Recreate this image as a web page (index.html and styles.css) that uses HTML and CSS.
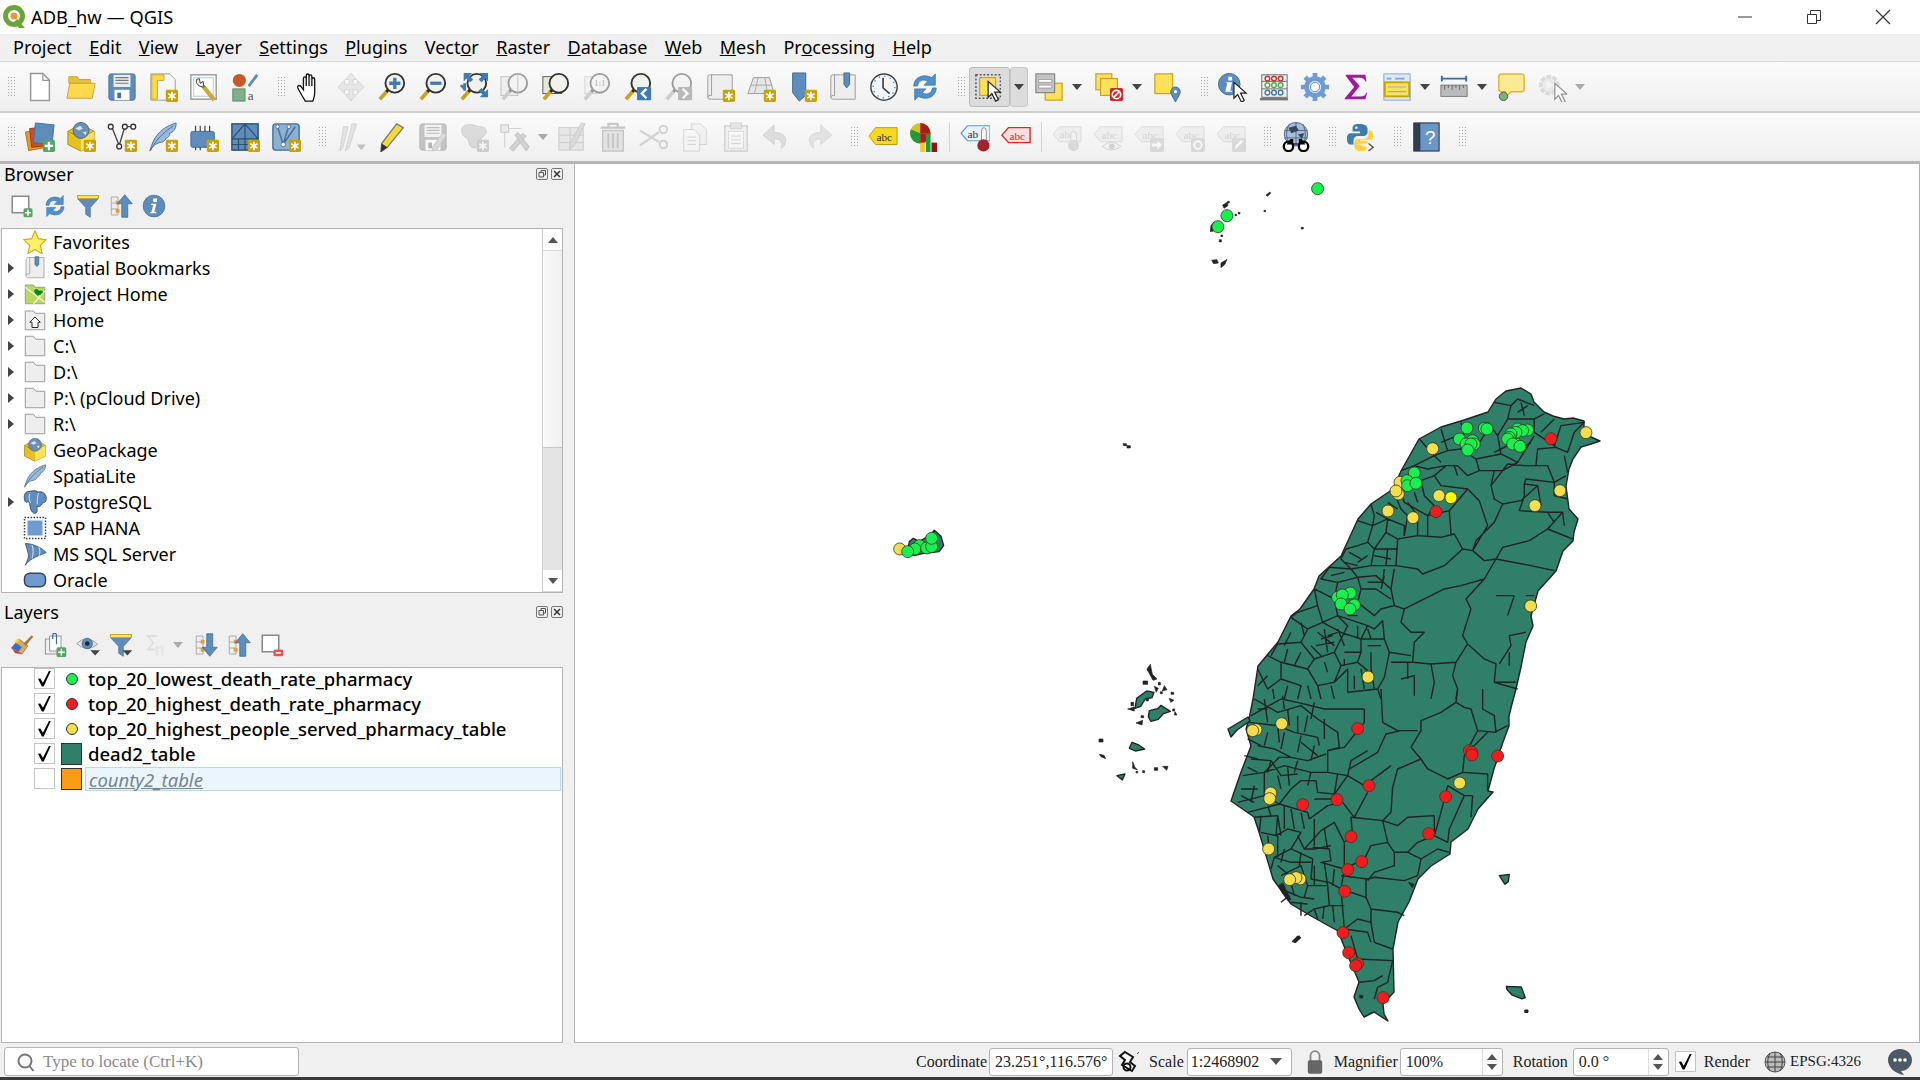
FILE: index.html
```html
<!DOCTYPE html>
<html lang="en">
<head>
  <meta charset="UTF-8">
  <title>ADB_hw — QGIS</title>
  <link rel="stylesheet" href="styles.css">
</head>
<body>
  <!-- icon sprite -->
  <svg class="sprite" xmlns="http://www.w3.org/2000/svg">
    <symbol id="badge" viewBox="0 0 32 32"><rect x="19" y="19" width="13" height="13" rx="1.5" fill="#c9a10a"/><path d="M25.5 21v9M21.6 23.2l7.8 4.6M21.6 27.8l7.8-4.6" stroke="#fff" stroke-width="1.7"/></symbol>
    <symbol id="cursor" viewBox="0 0 32 32"><path d="M14 10v17l4-4 4 8 3-1.500-4-8h6z" fill="#fff" stroke="#222" stroke-width="1.300"/></symbol>
    <symbol id="mag" viewBox="0 0 32 32"><path d="M12 19 3 29" stroke="#c9a227" stroke-width="4"/><path d="M13 18l-3 3" stroke="#222" stroke-width="3"/><circle cx="19" cy="12" r="10" fill="#f1f1ee" stroke="#333" stroke-width="2"/></symbol>
    <symbol id="i-new" viewBox="0 0 32 32"><path d="M6 1.500h13l7 7v22H6z" fill="#fff" stroke="#999" stroke-width="1.600"/><path d="M19 2v7h7" fill="none" stroke="#999" stroke-width="1.300"/></symbol>
    <symbol id="i-open" viewBox="0 0 32 32"><path d="M3 12V5h9l2 3h12v5z" fill="#e6c23a" stroke="#c9a227"/><path d="M1 28 4 12h27l-3 16z" fill="#fdd94f" stroke="#c9a227"/></symbol>
    <symbol id="i-save" viewBox="0 0 32 32"><rect x="2" y="2" width="28" height="28" rx="2.500" fill="#5f8dbb" stroke="#44709b"/><rect x="7" y="3" width="18" height="13" fill="#eee"/><path d="M9 6h14M9 9h14M9 12h14" stroke="#777" stroke-width="1.300"/><rect x="8" y="19" width="16" height="11" fill="#fff"/><rect x="11" y="22" width="4" height="6" fill="#44709b"/></symbol>
    <symbol id="i-layout" viewBox="0 0 32 32"><path d="M3 2h20l6 6v22H3z" fill="#f7f7f7" stroke="#999"/><path d="M4 3h13v6H10v20H4z" fill="#fcd94b" stroke="#c9a227"/><use href="#badge"/></symbol>
    <symbol id="i-manager" viewBox="0 0 32 32"><rect x="2" y="3" width="27" height="26" fill="#fff" stroke="#999" stroke-width="1.500"/><rect x="5" y="6" width="21" height="20" fill="none" stroke="#c8d8ea" stroke-width="1.500"/><path d="M15 15 27 30" stroke="#c9a742" stroke-width="4.500"/><path d="M8 8c-1 4 2 8 8 8l-1-6-3 2-1-5z" fill="#eee" stroke="#333"/></symbol>
    <symbol id="i-style" viewBox="0 0 32 32"><circle cx="10" cy="9" r="7" fill="#c6592b"/><path d="M20 15 29 3" stroke="#5f8dbb" stroke-width="3"/><rect x="3" y="18" width="13" height="13" fill="#7fb08a" stroke="#5a8a66"/></symbol>
    <symbol id="i-hand" viewBox="0 0 32 32"><path d="M11 31C8 26 5 21 3 17c-1-2.500 2-3.500 3.500-1.500L9 19V7c0-2.500 3-2.500 3 0v8V4c0-2.500 3-2.500 3 0v11V5c0-2.500 3-2.500 3 0v10V8c0-2.500 3-2.500 3 0v14c0 4-1 6-2 9z" fill="#fff" stroke="#111" stroke-width="1.400"/></symbol>
    <symbol id="i-pan" viewBox="0 0 32 32"><path d="M16 1l6 7h-4v5h5V9l7 7-7 7v-4h-5v5h4l-6 7-6-7h4v-5H9v4l-7-7 7-7v4h5V8h-4z" fill="#cfd6d6" stroke="#a8b2b2"/></symbol>
    <symbol id="i-zin" viewBox="0 0 32 32"><use href="#mag"/><path d="M13 12h12M19 6v12" stroke="#3f7ab5" stroke-width="3.500"/></symbol>
    <symbol id="i-zout" viewBox="0 0 32 32"><use href="#mag"/><path d="M13 12h12" stroke="#3f7ab5" stroke-width="3.500"/></symbol>
    <symbol id="i-zfull" viewBox="0 0 32 32"><use href="#mag"/><path d="M5 1h9l-3 3 4 4-3 3-4-4-3 3zM31 1v9l-3-3-4 4-3-3 4-4-3-3zM31 27h-9l3-3-4-4 3-3 4 4 3-3v9z" fill="#3f7ab5"/><path d="M6 12v8M2 14l4 4" stroke="#3f7ab5" stroke-width="3"/></symbol>
    <symbol id="i-zlayer" viewBox="0 0 32 32"><rect x="2" y="5" width="20" height="18" fill="#e8e8d8" stroke="#555"/><use href="#mag"/></symbol>
    <symbol id="i-zsel" viewBox="0 0 32 32"><rect x="1" y="5" width="18" height="20" fill="#e8e8d0" stroke="#888"/><use href="#mag"/><path d="M19 2v20" stroke="#888"/></symbol>
    <symbol id="i-znative" viewBox="0 0 32 32"><rect x="3" y="5" width="18" height="18" fill="#eee" stroke="#aaa"/><use href="#mag"/></symbol>
    <symbol id="i-zlast" viewBox="0 0 32 32"><use href="#mag"/><rect x="15" y="16" width="15" height="14" rx="1" fill="#3f7ab5"/><path d="M25 18l-5 5 5 5" fill="none" stroke="#fff" stroke-width="2.500"/></symbol>
    <symbol id="i-znext" viewBox="0 0 32 32"><use href="#mag"/><rect x="15" y="16" width="15" height="14" rx="1" fill="#3f7ab5"/><path d="M20 18l5 5-5 5" fill="none" stroke="#fff" stroke-width="2.500"/></symbol>
    <symbol id="i-newmap" viewBox="0 0 32 32"><path d="M5 3c-2 0-2 2-2 4v20c0 2 2 2 4 2h22V3z" fill="#eee" stroke="#999"/><path d="M7 3v22c-2 0-4 0-4 2" fill="none" stroke="#999"/><use href="#badge"/></symbol>
    <symbol id="i-3d" viewBox="0 0 32 32"><path d="M8 6h17l5 17H2z" fill="#e6e6e6" stroke="#999"/><path d="M13 6l-4 17M20 6l3 17M5 14h23" stroke="#aaa"/><path d="M30 26h2" stroke="#999"/><use href="#badge"/></symbol>
    <symbol id="i-newbm" viewBox="0 0 32 32"><path d="M6 1h14v24l-7 6-7-9z" fill="#5f8dbb" stroke="#3f6a94"/><use href="#badge"/></symbol>
    <symbol id="i-bm" viewBox="0 0 32 32"><path d="M5 3c-2 0-2 2-2 4v20c0 2 2 2 4 2h22V3z" fill="#eee" stroke="#999"/><path d="M7 3v22c-2 0-4 0-4 2" fill="none" stroke="#999"/><path d="M17 1h6v12l-3 4-3-4z" fill="#5f8dbb" stroke="#3f6a94"/></symbol>
    <symbol id="i-clock" viewBox="0 0 32 32"><circle cx="16" cy="16" r="14" fill="#f4f6f8" stroke="#444" stroke-width="1.600"/><circle cx="16" cy="16" r="11.500" fill="none" stroke="#5f8dbb" stroke-width="1.500" stroke-dasharray="1.500 4.500"/><path d="M15 6v11l7 6" fill="none" stroke="#444" stroke-width="1.800"/></symbol>
    <symbol id="i-refresh" viewBox="0 0 32 32"><path d="M4 15C4 6 14 1 23 6l4-4v12H15l4-4c-5-3-10-1-11 5z" fill="#4f90cd" stroke="#3f72a8" stroke-width=".8"/><path d="M28 17c0 9-10 14-19 9l-4 4V18h12l-4 4c5 3 10 1 11-5z" fill="#4f90cd" stroke="#3f72a8" stroke-width=".8"/></symbol>
    <symbol id="i-select" viewBox="0 0 32 32"><rect x="1" y="3" width="26" height="25" fill="none" stroke="#555" stroke-width="1.500" stroke-dasharray="2 2"/><rect x="5" y="6" width="17" height="19" fill="#fce25a" stroke="#c9a227" stroke-width="1.300"/><use href="#cursor"/></symbol>
    <symbol id="i-selval" viewBox="0 0 32 32"><rect x="12" y="12" width="18" height="18" fill="#fce25a" stroke="#c9a227" stroke-width="1.300"/><rect x="2" y="2" width="20" height="20" fill="#c4c4c4" stroke="#888" stroke-width="1.300"/><path d="M5 8h14v3H5zM5 14h14v3H5z" fill="#fff" stroke="#777" stroke-width=".6"/></symbol>
    <symbol id="i-desel" viewBox="0 0 32 32"><rect x="2" y="2" width="17" height="17" fill="#fce25a" stroke="#c9a227" stroke-width="1.300"/><rect x="7" y="7" width="18" height="18" fill="#fce25a" stroke="#c9a227" stroke-width="1.300"/><rect x="17" y="17" width="14" height="14" rx="2" fill="#d8232a"/><circle cx="24" cy="24" r="4.500" fill="none" stroke="#fff" stroke-width="1.800"/><path d="M21 27l6-6" stroke="#fff" stroke-width="1.800"/></symbol>
    <symbol id="i-selloc" viewBox="0 0 32 32"><rect x="2" y="2" width="19" height="21" fill="#fce25a" stroke="#c9a227" stroke-width="1.300"/><path d="M24 32c-3-6-5-8-5-11a5 5 0 0 1 10 0c0 3-2 5-5 11z" fill="#5f8dbb" stroke="#3f6a94"/><circle cx="24" cy="21" r="1.700" fill="#fff"/></symbol>
    <symbol id="i-ident" viewBox="0 0 32 32"><circle cx="12" cy="13" r="11.500" fill="#5f8dbb" stroke="#44709b"/><path d="M11 5h4v4h-4zM9 11h6l-2 9h2v1H8v-1l2-8H9z" fill="#fff"/><use href="#cursor" transform="translate(3 1)"/></symbol>
    <symbol id="i-calc" viewBox="0 0 32 32"><rect x="3" y="3" width="27" height="24" fill="#f4f4f4" stroke="#666"/><path d="M3 10h27M3 18h27" stroke="#666"/><g fill="none" stroke-width="1.500"><circle cx="9" cy="7" r="2.500" stroke="#c33"/><circle cx="16" cy="7" r="2.500" stroke="#c33"/><circle cx="23" cy="7" r="2.500" stroke="#c33"/><circle cx="9" cy="14" r="2.500" stroke="#5a5"/><circle cx="16" cy="14" r="2.500" stroke="#5a5"/><circle cx="23" cy="14" r="2.500" stroke="#5a5"/><circle cx="9" cy="22" r="2.500" stroke="#47a"/><circle cx="16" cy="22" r="2.500" stroke="#47a"/><circle cx="23" cy="22" r="2.500" stroke="#47a"/></g><path d="M1 29h30" stroke="#777" stroke-width="2.500"/></symbol>
    <symbol id="i-gear" viewBox="0 0 32 32"><circle cx="16" cy="16" r="9" fill="none" stroke="#6f9bd6" stroke-width="5"/><path d="M16 1v6M16 25v6M1 16h6M25 16h6M5.500 5.500l4.500 4.500M22 22l4.500 4.500M5.500 26.500 10 22M22 10l4.500-4.500" stroke="#6f9bd6" stroke-width="5"/><circle cx="16" cy="16" r="5" fill="#fff" stroke="#5a85bd"/></symbol>
    <symbol id="i-sigma" viewBox="0 0 32 32"><path d="M5 3h21l1 7h-1c-1-3-3-4-6-4H12l8 9-9 11h10c3 0 5-1 6-4h1l-2 7H4v-1l10-12L5 4z" fill="#a01a9c"/></symbol>
    <symbol id="i-table" viewBox="0 0 32 32"><rect x="2" y="2" width="28" height="28" fill="#dce8f5" stroke="#7ea3cc"/><path d="M5 7h5M14 7h10" stroke="#7ea3cc" stroke-width="2"/><rect x="3" y="11" width="26" height="15" fill="#fce25a" stroke="#c9a10a" stroke-width="2"/><path d="M6 16h20M6 21h20" stroke="#aaa" stroke-width="1.300"/></symbol>
    <symbol id="i-measure" viewBox="0 0 32 32"><path d="M3 7h26M3 4v6M29 4v6" stroke="#3f6a94" stroke-width="2"/><rect x="2" y="14" width="28" height="12" fill="#bbb" stroke="#777"/><path d="M6 14v5M10 14v3M14 14v5M18 14v3M22 14v5M26 14v3" stroke="#666"/></symbol>
    <symbol id="i-tips" viewBox="0 0 32 32"><path d="M6 2h21q3 0 3 3v13q0 3-3 3H16l-6 6v-6H6q-3 0-3-3V5q0-3 3-3z" fill="#fdeb93" stroke="#d9b83f" stroke-width="1.600"/><circle cx="8" cy="26" r="4.500" fill="#7fb06f" stroke="#555"/></symbol>
    <symbol id="i-action" viewBox="0 0 32 32"><circle cx="13" cy="14" r="9" fill="#ddd" stroke="#bbb" stroke-width="4" stroke-dasharray="5 1.500"/><path d="M10 9l8 5-8 5z" fill="#f2f2f2"/><use href="#cursor" transform="translate(5 2)"/></symbol>
    <symbol id="i-data" viewBox="0 0 32 32"><rect x="2" y="9" width="18" height="20" fill="#e29a2e" stroke="#b3701a" transform="rotate(-10 11 19)"/><rect x="6" y="6" width="18" height="20" fill="#c9502c" stroke="#993a1f" transform="rotate(-6 15 16)"/><rect x="10" y="2" width="20" height="21" fill="#5f8dbb" stroke="#44709b" transform="rotate(6 20 12)"/><rect x="19" y="19" width="13" height="13" rx="2" fill="#58a368"/><path d="M25.500 21v9M21 25.500h9" stroke="#fff" stroke-width="2.400"/></symbol>
    <symbol id="i-cube" viewBox="0 0 32 32"><path d="M16 2 30 10v14L16 31 2 24V10z" fill="#e6c21e" stroke="#a58a10"/><path d="M2 10l14 7 14-7" fill="none" stroke="#a58a10"/><path d="M16 17v14L30 24V10z" fill="#fce25a"/><circle cx="16" cy="9" r="8.500" fill="#6e8fb5" stroke="#4b6788"/><path d="M10 7l5-3 3 3-4 2zM18 11l4-1-1 4z" fill="#d8e2ee"/></symbol>
    <symbol id="i-vector" viewBox="0 0 32 32"><path d="M5 5l8 20 6-20h9" fill="none" stroke="#444" stroke-width="1.400"/><g fill="#fff" stroke="#333" stroke-width="1.400"><circle cx="4" cy="5" r="2.600"/><circle cx="13" cy="26" r="2.600"/><circle cx="19" cy="5" r="2.600"/><circle cx="28" cy="5" r="2.600"/></g><use href="#badge"/></symbol>
    <symbol id="i-feather" viewBox="0 0 32 32"><path d="M2 31C5 20 10 7 30 1c0 8-4 10-7 11 1 2-2 5-4 5 0 3-4 5-7 5-3 1-7 3-10 9z" fill="#9db9d9" stroke="#44709b"/><path d="M3 30c4-9 11-17 24-26" fill="none" stroke="#44709b"/></symbol>
    <symbol id="i-feathernew" viewBox="0 0 32 32"><use href="#i-feather"/><use href="#badge"/></symbol>
    <symbol id="i-chip" viewBox="0 0 32 32"><rect x="2" y="10" width="25" height="17" rx="2" fill="#5f8dbb" stroke="#3f6a94"/><path d="M7 4v6M12 4v6M17 4v6M22 4v6M7 27v3M12 27v3" stroke="#444" stroke-width="1.300"/><use href="#badge"/></symbol>
    <symbol id="i-mesh" viewBox="0 0 32 32"><rect x="2" y="2" width="28" height="28" fill="#5f8dbb" stroke="#2f4f70" stroke-width="1.500"/><path d="M2 18h28M16 18v12M2 24h28M9 18v12M16 2 2 18M16 2l14 16M16 2v16" stroke="#2f4f70" stroke-width="1.300" fill="none"/><use href="#badge"/></symbol>
    <symbol id="i-virtual" viewBox="0 0 32 32"><rect x="2" y="2" width="28" height="28" rx="3" fill="#8eb0d3" stroke="#44709b" stroke-width="1.500"/><path d="M7 5l6 19 6-20M13 24l13-19" fill="none" stroke="#44709b" stroke-width="1.600"/><g fill="#fff" stroke="#44709b"><circle cx="7" cy="5" r="2"/><circle cx="13" cy="24" r="2.500"/><circle cx="19" cy="5" r="2"/></g><use href="#badge"/></symbol>
    <symbol id="i-pencils" viewBox="0 0 32 32"><path d="M8 5h5L7 28l-3 3zM17 2h5l-8 25-4 4z" fill="#ccc" stroke="#aaa"/><path d="M22 24h10l-5 6z" fill="#888"/></symbol>
    <symbol id="i-pencil" viewBox="0 0 32 32"><path d="M21 2l7 4L11 27l-7 5 1-9z" fill="#f4d83c" stroke="#777" stroke-width="1.300"/><path d="M5 23l6 4-7 5z" fill="#333"/></symbol>
    <symbol id="i-saveed" viewBox="0 0 32 32"><use href="#i-save"/><path d="M30 14 20 30l-5 1 1-5 10-14z" fill="#bbb" stroke="#999"/></symbol>
    <symbol id="i-blob" viewBox="0 0 32 32"><path d="M3 8c0-6 10-6 15-4s11 0 11 6-6 5-6 10-4 9-9 7-2-8-6-10-5-4-5-9z" fill="#bbb" stroke="#999"/><use href="#badge"/></symbol>
    <symbol id="i-modify" viewBox="0 0 32 32"><rect x="1" y="3" width="8" height="8" fill="#ddd" stroke="#888"/><path d="M9 7h14M5 11v16" stroke="#999"/><path d="M10 28 24 12l4 3-14 16zM28 31 16 14l3-3 12 15z" fill="#aaa" stroke="#888"/></symbol>
    <symbol id="i-tabled" viewBox="0 0 32 32"><rect x="2" y="6" width="26" height="24" fill="#d8d8c8" stroke="#999"/><path d="M2 14h26M2 22h26M14 6v24" stroke="#999"/><path d="M30 2 18 26l-5 3 1-6L26 1z" fill="#bbb" stroke="#999"/></symbol>
    <symbol id="i-trash" viewBox="0 0 32 32"><path d="M3 6h26M11 6V2h10v4" fill="none" stroke="#a08a86" stroke-width="2.200"/><rect x="5" y="9" width="22" height="22" fill="#d8ccc8" stroke="#a08a86" stroke-width="1.500"/><path d="M11 12v16M16 12v16M21 12v16" stroke="#a08a86" stroke-width="2"/></symbol>
    <symbol id="i-cut" viewBox="0 0 32 32"><path d="M1 9l20 12M1 25 21 11" stroke="#aaa" stroke-width="2.500"/><circle cx="26" cy="8" r="4" fill="none" stroke="#aaa" stroke-width="2.200"/><circle cx="26" cy="24" r="4" fill="none" stroke="#aaa" stroke-width="2.200"/></symbol>
    <symbol id="i-copy" viewBox="0 0 32 32"><path d="M12 2h10l6 6v16H12z" fill="#eee" stroke="#aaa"/><path d="M4 8h11l6 6v17H4z" fill="#f6f6f6" stroke="#aaa"/><path d="M8 16h9M8 20h9M8 24h9" stroke="#aaa"/></symbol>
    <symbol id="i-paste" viewBox="0 0 32 32"><rect x="4" y="4" width="24" height="27" fill="#e8e8e8" stroke="#aaa" stroke-width="1.500"/><rect x="8" y="10" width="16" height="18" fill="#fafafa" stroke="#bbb"/><rect x="10" y="1" width="12" height="6" fill="#ccc" stroke="#aaa"/><path d="M11 15h10M11 19h10M11 23h10" stroke="#aaa"/></symbol>
    <symbol id="i-undo" viewBox="0 0 32 32"><path d="M13 3 1 14l12 10v-6c6 0 9 2 8 10 6-5 8-16-8-17z" fill="#cdbfbb" stroke="#b5a7a3"/></symbol>
    <symbol id="i-redo" viewBox="0 0 32 32"><path d="M19 3l12 11-12 10v-6c-6 0-9 2-8 10-6-5-8-16 8-17z" fill="#ccc" stroke="#b5b5b5"/></symbol>
    <symbol id="i-abc" viewBox="0 0 32 32"><path d="M8 6h23v18H8l-7-9z" fill="#f6d820" stroke="#b89a10"/></symbol>
    <symbol id="i-pie" viewBox="0 0 32 32"><circle cx="12" cy="12" r="11" fill="#d8c020"/><path d="M12 12V1A11 11 0 0 1 23 12z" fill="#a81c1c"/><path d="M12 12 2 8a11 11 0 0 0 10 15z" fill="#1f9a3c"/><path d="M12 12 23 12a11 11 0 0 1-11 11z" fill="#a81c1c"/><rect x="12" y="22" width="5" height="10" fill="#f4c820"/><rect x="18" y="13" width="5" height="19" fill="#1f9a3c"/><rect x="24" y="22" width="6" height="10" fill="#8a1818"/></symbol>
    <symbol id="i-abpin" viewBox="0 0 32 32"><path d="M8 4h24v16H8l-7-8z" fill="#eaf2fc" stroke="#5a9bea" stroke-width="1.300"/></symbol>
    <symbol id="i-pinred" viewBox="0 0 32 32"><path d="M23 10a2.500 4 0 0 1 5 0v10h-5z" fill="#fff" stroke="#888"/><circle cx="25" cy="25" r="6.500" fill="#a3232c"/></symbol>
    <symbol id="i-abcred" viewBox="0 0 32 32"><path d="M8 6h23v16H8l-7-8z" fill="#ffe0e0" stroke="#e3242b" stroke-width="1.500"/></symbol>
    <symbol id="i-grtag" viewBox="0 0 32 32"><path d="M8 5h23v16H8l-7-8z" fill="#e6e6dc" stroke="#bbb"/></symbol>
    <symbol id="o-pin" viewBox="0 0 32 32"><path d="M20 14a3 4 0 0 1 6 0v6h-6z" fill="#eee" stroke="#aaa"/><circle cx="23" cy="25" r="6" fill="#bbb"/></symbol>
    <symbol id="o-eye" viewBox="0 0 32 32"><path d="M10 26q9-9 20 0-11 8-20 0z" fill="#eee" stroke="#aaa"/><circle cx="20" cy="26" r="3" fill="#aaa"/></symbol>
    <symbol id="o-move" viewBox="0 0 32 32"><rect x="17" y="17" width="15" height="15" rx="2" fill="#bbb"/><path d="M19 23h6v-3l5 4.500-5 4.500v-3h-6z" fill="#fff"/></symbol>
    <symbol id="o-rot" viewBox="0 0 32 32"><rect x="17" y="17" width="15" height="15" rx="2" fill="#bbb"/><circle cx="24.500" cy="24.500" r="4" fill="none" stroke="#fff" stroke-width="2"/></symbol>
    <symbol id="o-ed" viewBox="0 0 32 32"><rect x="17" y="17" width="15" height="15" rx="2" fill="#bbb"/><path d="M20 29l1-4 6-6 2 2-6 6z" fill="#fff"/></symbol>
    <symbol id="i-globe" viewBox="0 0 32 32"><circle cx="16" cy="13" r="12.500" fill="#a8bed8" stroke="#4b6788"/><path d="M4 9h24M4 17h24M16 1v24M9 2c-4 8-4 15 0 22M23 2c4 8 4 15 0 22" fill="none" stroke="#4b6788"/><path d="M8 6l8-2 3 5-8 3zM18 13l7-1-3 6z" fill="#33475e"/><circle cx="8" cy="26" r="5" fill="#fff" stroke="#000" stroke-width="2.500"/><circle cx="24" cy="26" r="5" fill="#fff" stroke="#000" stroke-width="2.500"/><path d="M6 24l4-6h3v5h6v-5h3l4 6z" fill="#000"/></symbol>
    <symbol id="i-python" viewBox="0 0 32 32"><path d="M14 2c-6 0-7 2-7 5v3h8v2H5c-3 0-4 3-4 6s1 6 4 6h3v-4c0-3 2-5 5-5h6c2 0 4-2 4-4V7c0-3-3-5-9-5z" fill="#3f7cad"/><path d="M15 24h-2c-3 0-5 0 5-1h5v-3h-8v-1h11c3 0 3-3 3-5s-1-5-3-5h-2v4c0 3-2 5-5 5h-6c-2 0-4 2-4 4v4c0 3 3 5 6 5h3c2 0 4-1 4-4z" fill="#fdd23c"/><circle cx="11" cy="6" r="1.300" fill="#fff"/><path d="M24 23l5 4-5 4" fill="none" stroke="#555" stroke-width="1.500"/></symbol>
    <symbol id="i-help" viewBox="0 0 32 32"><rect x="3" y="1" width="27" height="30" fill="#6a97c8" stroke="#222"/><rect x="3" y="1" width="7" height="30" fill="#2c3e50"/></symbol>
    <symbol id="i-addgrp" viewBox="0 0 32 32"><rect x="3" y="3" width="22" height="22" fill="#fff" stroke="#888" stroke-width="2"/><rect x="18" y="19" width="12" height="12" rx="2" fill="#58a368"/><path d="M24 21v8M20 25h8" stroke="#fff" stroke-width="2"/></symbol>
    <symbol id="i-rmgrp" viewBox="0 0 32 32"><rect x="3" y="3" width="22" height="22" fill="#fff" stroke="#888" stroke-width="2"/><rect x="18" y="22" width="13" height="9" rx="2" fill="#e3545a"/><path d="M21 26.500h7" stroke="#fff" stroke-width="2"/></symbol>
    <symbol id="i-filter" viewBox="0 0 32 32"><path d="M2 2h28v4L19 18v13l-6-4v-9L2 6z" fill="#5f8dbb" stroke="#44709b"/><rect x="2" y="2" width="28" height="4" fill="#fce25a" stroke="#c9a227"/></symbol>
    <symbol id="i-filterd" viewBox="0 0 32 32"><use href="#i-filter"/><path d="M18 23h13l-6.500 7z" fill="#444"/></symbol>
    <symbol id="i-collapse" viewBox="0 0 32 32"><path d="M3 4h9v24H3zM3 12h9M3 20h9" fill="#eee" stroke="#999"/><rect x="9" y="9" width="5" height="5" fill="#f09a2e"/><rect x="9" y="20" width="5" height="5" fill="#f09a2e"/><path d="M21 1l10 12h-6v18h-8V13h-6z" fill="#5f8dbb" stroke="#3f6a94"/></symbol>
    <symbol id="i-expand" viewBox="0 0 32 32"><path d="M3 4h9v24H3zM3 12h9M3 20h9" fill="#eee" stroke="#999"/><rect x="9" y="9" width="5" height="5" fill="#f09a2e"/><rect x="9" y="20" width="5" height="5" fill="#f09a2e"/><path d="M21 31 31 19h-6V1h-8v18h-6z" fill="#5f8dbb" stroke="#3f6a94"/></symbol>
    <symbol id="i-info" viewBox="0 0 32 32"><circle cx="16" cy="16" r="14.500" fill="#5f8dbb" stroke="#44709b"/><path d="M15 6h5v4.500h-5zM12 13h7l-2.500 11H19v1.500h-8V24h1.500L15 14.500h-3z" fill="#fff"/></symbol>
    <symbol id="i-brush" viewBox="0 0 32 32"><path d="M2 20 12 8l12 9-8 11z" fill="#d9a968" stroke="#9a7040"/><path d="M2 20l6-7 8 6-5 6z" fill="#3d6fc0"/><path d="M2 20l4 3 5 2 5 3-9-1z" fill="#d83030"/><path d="M6 12l4-5 3 2-4 5z" fill="#f4d83c"/><path d="M18 14 29 3l2 2-10 12z" fill="#a87838"/></symbol>
    <symbol id="i-addlay" viewBox="0 0 32 32"><rect x="3" y="8" width="17" height="20" fill="#eee" stroke="#777"/><rect x="9" y="4" width="15" height="20" fill="#fff" stroke="#777"/><path d="M13 8V3a2 2 0 0 1 5 0v12" fill="none" stroke="#3f6a94" stroke-width="1.600"/><rect x="18" y="19" width="13" height="13" rx="2" fill="#58a368"/><path d="M24.500 21v9M20 25.500h9" stroke="#fff" stroke-width="2"/></symbol>
    <symbol id="i-eye" viewBox="0 0 32 32"><path d="M1 14Q14 1 29 15 14 27 1 14z" fill="#e6e6e6" stroke="#888"/><circle cx="15" cy="14" r="7" fill="#5f8dbb" stroke="#3f6a94"/><circle cx="15" cy="14" r="3" fill="#222"/><path d="M19 23h13l-6.500 7z" fill="#444"/></symbol>
    <symbol id="i-expr" viewBox="0 0 32 32"><path d="M20 4H8l7 9-7 9h12" fill="none" stroke="#ccc" stroke-width="2.500"/><path d="M18 17h11v13h-4v-9h-3v9h-4z" fill="#ddd"/></symbol>
    <symbol id="i-star" viewBox="0 0 32 32"><path d="M16 1l4.500 10.500L31 13l-8 7.500 2.500 11L16 26l-9.500 5.500 2.500-11L1 13l10.500-1.500z" fill="#fdf16a" stroke="#d3a90f" stroke-width="1.500"/></symbol>
    <symbol id="i-tbm" viewBox="0 0 32 32"><path d="M7 2c-2 0-3 2-3 4v20c0 2 1 3 3 3h21V2z" fill="#eee" stroke="#999"/><path d="M9 2v22c-3 0-5 0-5 2" fill="none" stroke="#999"/><path d="M16 1h5v10l-2.500 3-2.500-3z" fill="#5f8dbb" stroke="#3f6a94"/></symbol>
    <symbol id="i-proj" viewBox="0 0 32 32"><path d="M3 4h11l2 3h13v22H3z" fill="#b8d860" stroke="#888"/><path d="M3 7l26 20M14 29 29 12" stroke="#eef5c8" stroke-width="2"/><path d="M19 18c-3-3-5-5-4-7s5-2 6 0 3-1 5 1-3 6-7 6z" fill="#0a8a1c"/></symbol>
    <symbol id="i-home" viewBox="0 0 32 32"><path d="M3 4h11l2 3h13v22H3z" fill="#eee" stroke="#999" stroke-width="1.300"/><path d="M9 19l7-7 7 7h-3v7h-8v-7z" fill="#fff" stroke="#222" stroke-width="1.300"/></symbol>
    <symbol id="i-folder" viewBox="0 0 32 32"><path d="M3 3h11l3 4h12v22H3z" fill="#eee" stroke="#999" stroke-width="1.300"/></symbol>
    <symbol id="i-pg" viewBox="0 0 32 32"><path d="M8 2C2 2 1 8 2 13c1 4 3 4 5 2l2 3c0 4 2 13 7 13 4 0 3-6 2-9 3 1 7-1 8-5 3 0 5-1 5-6 0-6-6-10-11-8-3-3-8-2-12-1z" fill="#5f8dbb" stroke="#2f4f70" stroke-width="1.300"/><path d="M9 5c-2 4 0 9 1 12M21 4c-2 4-2 10-2 15" fill="none" stroke="#fff"/></symbol>
    <symbol id="i-sap" viewBox="0 0 32 32"><rect x="2" y="2" width="28" height="28" fill="#fff" stroke="#33475e" stroke-width="2" stroke-dasharray="2 2"/><rect x="6" y="6" width="20" height="20" fill="#6f9bd0"/></symbol>
    <symbol id="i-mssql" viewBox="0 0 32 32"><path d="M3 2c11 0 22 6 28 12-8 4-20 6-28 17 3-7 5-10 4-15S4 5 3 2z" fill="#5f8dbb" stroke="#33475e"/><path d="M12 4c2 5 2 12 0 18M21 7c2 3 2 8 0 13" fill="none" stroke="#dbe6f2" stroke-width="1.300"/></symbol>
    <symbol id="i-oracle" viewBox="0 0 32 32"><rect x="2" y="7" width="28" height="18" rx="7" fill="#6f9bd0" stroke="#33475e" stroke-width="2"/></symbol>
    <symbol id="d-float" viewBox="0 0 12 12"><rect x=".5" y=".5" width="11" height="11" rx="1.500" fill="none" stroke="#777"/><path d="M3 4.500h4.500V9H3zM5 4V2.500h4.500V7H8" fill="none" stroke="#555"/></symbol>
    <symbol id="d-close" viewBox="0 0 12 12"><rect x=".5" y=".5" width="11" height="11" rx="1.500" fill="none" stroke="#777"/><path d="M3 3l6 6M9 3 3 9" stroke="#333" stroke-width="1.500"/></symbol>
  </svg>

  <header class="titlebar">
    <svg class="logo" viewBox="0 0 24 24"><circle cx="11" cy="11" r="8.500" fill="none" stroke="#6ba53a" stroke-width="5"/><path d="M14 14l8 9h-6l-5-6z" fill="#6ba53a"/><circle cx="11" cy="11" r="3.500" fill="#e8983a"/></svg>
    <span class="title">ADB_hw — QGIS</span>
    <div class="winbtns">
      <svg viewBox="0 0 16 16"><path d="M1 8h14" stroke="#333"/></svg>
      <svg viewBox="0 0 16 16"><path d="M1.500 5.500h9v9h-9zM4.500 5V1.500h10v10H11" fill="none" stroke="#333"/></svg>
      <svg viewBox="0 0 16 16"><path d="M1 1l14 14M15 1 1 15" stroke="#333" stroke-width="1.200"/></svg>
    </div>
  </header>

  <nav class="menubar">
    <span>Pro<u>j</u>ect</span><span><u>E</u>dit</span><span><u>V</u>iew</span><span><u>L</u>ayer</span><span><u>S</u>ettings</span><span><u>P</u>lugins</span><span>Vect<u>o</u>r</span><span><u>R</u>aster</span><span><u>D</u>atabase</span><span><u>W</u>eb</span><span><u>M</u>esh</span><span>Pr<u>o</u>cessing</span><span><u>H</u>elp</span>
  </nav>

  <div class="toolbar">
    <i class="handle first"></i>
    <span class="tb"><svg><use href="#i-new"/></svg></span>
    <span class="tb"><svg><use href="#i-open"/></svg></span>
    <span class="tb"><svg><use href="#i-save"/></svg></span>
    <span class="tb"><svg><use href="#i-layout"/></svg></span>
    <span class="tb"><svg><use href="#i-manager"/></svg></span>
    <span class="tb"><svg viewBox="0 0 32 32"><use href="#i-style"/><text x="19" y="30" class="svg-t">a</text></svg></span>
    <i class="handle"></i>
    <span class="tb"><svg><use href="#i-hand"/></svg></span>
    <span class="tb off"><svg><use href="#i-pan"/></svg></span>
    <span class="tb"><svg><use href="#i-zin"/></svg></span>
    <span class="tb"><svg><use href="#i-zout"/></svg></span>
    <span class="tb"><svg><use href="#i-zfull"/></svg></span>
    <span class="tb off"><svg><use href="#i-zsel"/></svg></span>
    <span class="tb"><svg><use href="#i-zlayer"/></svg></span>
    <span class="tb off"><svg viewBox="0 0 32 32"><use href="#i-znative"/><text x="13" y="15" class="svg-t svg-s">1:1</text></svg></span>
    <span class="tb"><svg><use href="#i-zlast"/></svg></span>
    <span class="tb off"><svg><use href="#i-znext"/></svg></span>
    <span class="tb"><svg><use href="#i-newmap"/></svg></span>
    <span class="tb"><svg><use href="#i-3d"/></svg></span>
    <span class="tb"><svg><use href="#i-newbm"/></svg></span>
    <span class="tb"><svg><use href="#i-bm"/></svg></span>
    <span class="tb"><svg><use href="#i-clock"/></svg></span>
    <span class="tb"><svg><use href="#i-refresh"/></svg></span>
    <i class="handle"></i>
    <span class="tb active"><svg><use href="#i-select"/></svg></span><span class="drop active"><b></b></span>
    <span class="tb"><svg><use href="#i-selval"/></svg></span><span class="drop"><b></b></span>
    <span class="tb gap3"><svg><use href="#i-desel"/></svg></span><span class="drop"><b></b></span>
    <span class="tb gap2"><svg><use href="#i-selloc"/></svg></span>
    <i class="handle"></i>
    <span class="tb"><svg><use href="#i-ident"/></svg></span>
    <span class="tb"><svg><use href="#i-calc"/></svg></span>
    <span class="tb"><svg><use href="#i-gear"/></svg></span>
    <span class="tb"><svg><use href="#i-sigma"/></svg></span>
    <span class="tb"><svg><use href="#i-table"/></svg></span><span class="drop"><b></b></span>
    <span class="tb"><svg><use href="#i-measure"/></svg></span><span class="drop"><b></b></span>
    <span class="tb"><svg><use href="#i-tips"/></svg></span>
    <span class="tb off"><svg><use href="#i-action"/></svg></span><span class="drop off"><b></b></span>
  </div>

  <div class="toolbar toolbar-last">
    <i class="handle first"></i>
    <span class="tb"><svg><use href="#i-data"/></svg></span>
    <span class="tb"><svg><use href="#i-cube"/><use href="#badge"/></svg></span>
    <span class="tb"><svg><use href="#i-vector"/></svg></span>
    <span class="tb"><svg><use href="#i-feathernew"/></svg></span>
    <span class="tb"><svg><use href="#i-chip"/></svg></span>
    <span class="tb"><svg><use href="#i-mesh"/></svg></span>
    <span class="tb"><svg><use href="#i-virtual"/></svg></span>
    <i class="handle"></i>
    <span class="tb off"><svg><use href="#i-pencils"/></svg></span>
    <span class="tb"><svg><use href="#i-pencil"/></svg></span>
    <span class="tb off"><svg><use href="#i-saveed"/></svg></span>
    <span class="tb off"><svg><use href="#i-blob"/></svg></span>
    <span class="tb off"><svg><use href="#i-modify"/></svg></span><span class="drop off"><b></b></span>
    <span class="tb off"><svg><use href="#i-tabled"/></svg></span>
    <span class="tb off"><svg><use href="#i-trash"/></svg></span>
    <span class="tb off"><svg><use href="#i-cut"/></svg></span>
    <span class="tb off"><svg><use href="#i-copy"/></svg></span>
    <span class="tb off"><svg><use href="#i-paste"/></svg></span>
    <span class="tb off"><svg><use href="#i-undo"/></svg></span>
    <span class="tb off"><svg><use href="#i-redo"/></svg></span>
    <i class="handle"></i>
    <span class="tb"><svg viewBox="0 0 32 32"><use href="#i-abc"/><text x="9" y="20" class="svg-t svg-tag">abc</text></svg></span>
    <span class="tb"><svg><use href="#i-pie"/></svg></span>
    <i class="sep"></i>
    <span class="tb"><svg viewBox="0 0 32 32"><use href="#i-abpin"/><text x="8" y="17" class="svg-t svg-tag">ab</text><use href="#i-pinred"/></svg></span>
    <span class="tb"><svg viewBox="0 0 32 32"><use href="#i-abcred"/><text x="9" y="19" class="svg-t svg-tag svg-red">abc</text></svg></span>
    <i class="sep"></i>
    <span class="tb off"><svg viewBox="0 0 32 32"><use href="#i-grtag"/><text x="8" y="17" class="svg-t svg-tag svg-grey">ab</text><use href="#o-pin"/></svg></span>
    <span class="tb off"><svg viewBox="0 0 32 32"><use href="#i-grtag"/><text x="9" y="18" class="svg-t svg-tag svg-grey">abc</text><use href="#o-eye"/></svg></span>
    <span class="tb off"><svg viewBox="0 0 32 32"><use href="#i-grtag"/><text x="9" y="18" class="svg-t svg-tag svg-grey">abc</text><use href="#o-move"/></svg></span>
    <span class="tb off"><svg viewBox="0 0 32 32"><use href="#i-grtag"/><text x="9" y="18" class="svg-t svg-tag svg-grey">abc</text><use href="#o-rot"/></svg></span>
    <span class="tb off"><svg viewBox="0 0 32 32"><use href="#i-grtag"/><text x="9" y="18" class="svg-t svg-tag svg-grey">abc</text><use href="#o-ed"/></svg></span>
    <i class="handle"></i>
    <span class="tb"><svg><use href="#i-globe"/></svg></span>
    <i class="handle"></i>
    <span class="tb"><svg><use href="#i-python"/></svg></span>
    <i class="handle"></i>
    <span class="tb"><svg viewBox="0 0 32 32"><use href="#i-help"/><text x="15" y="23" class="svg-t svg-q">?</text></svg></span>
    <i class="handle"></i>
  </div>

  <main class="workspace">
    <aside class="docks">
      <section class="dock dock-browser">
        <div class="dock-head">
          <span>Browser</span>
          <span class="dock-btns"><svg viewBox="0 0 12 12"><use href="#d-float"/></svg><svg viewBox="0 0 12 12"><use href="#d-close"/></svg></span>
        </div>
        <div class="dock-tools">
          <span class="dk"><svg><use href="#i-addgrp"/></svg></span>
          <span class="dk"><svg><use href="#i-refresh"/></svg></span>
          <span class="dk"><svg><use href="#i-filter"/></svg></span>
          <span class="dk"><svg><use href="#i-collapse"/></svg></span>
          <span class="dk"><svg><use href="#i-info"/></svg></span>
        </div>
        <div class="tree-box">
          <ul class="tree">
            <li><i class="arrow none"></i><svg><use href="#i-star"/></svg>Favorites</li>
            <li><i class="arrow"></i><svg><use href="#i-tbm"/></svg>Spatial Bookmarks</li>
            <li><i class="arrow"></i><svg><use href="#i-proj"/></svg>Project Home</li>
            <li><i class="arrow"></i><svg><use href="#i-home"/></svg>Home</li>
            <li><i class="arrow"></i><svg><use href="#i-folder"/></svg>C:\</li>
            <li><i class="arrow"></i><svg><use href="#i-folder"/></svg>D:\</li>
            <li><i class="arrow"></i><svg><use href="#i-folder"/></svg>P:\ (pCloud Drive)</li>
            <li><i class="arrow"></i><svg><use href="#i-folder"/></svg>R:\</li>
            <li><i class="arrow none"></i><svg><use href="#i-cube"/></svg>GeoPackage</li>
            <li><i class="arrow none"></i><svg><use href="#i-feather"/></svg>SpatiaLite</li>
            <li><i class="arrow"></i><svg><use href="#i-pg"/></svg>PostgreSQL</li>
            <li><i class="arrow none"></i><svg><use href="#i-sap"/></svg>SAP HANA</li>
            <li><i class="arrow none"></i><svg><use href="#i-mssql"/></svg>MS SQL Server</li>
            <li><i class="arrow none"></i><svg><use href="#i-oracle"/></svg>Oracle</li>
          </ul>
          <div class="scrollbar">
            <span class="sb-btn"><b class="up"></b></span>
            <span class="sb-track"></span>
            <span class="sb-thumb"></span>
            <span class="sb-btn"><b class="down"></b></span>
          </div>
        </div>
      </section>

      <div class="splitter"></div>

      <section class="dock dock-layers">
        <div class="dock-head">
          <span>Layers</span>
          <span class="dock-btns"><svg viewBox="0 0 12 12"><use href="#d-float"/></svg><svg viewBox="0 0 12 12"><use href="#d-close"/></svg></span>
        </div>
        <div class="dock-tools">
          <span class="dk"><svg><use href="#i-brush"/></svg></span>
          <span class="dk"><svg><use href="#i-addlay"/></svg></span>
          <span class="dk"><svg><use href="#i-eye"/></svg></span>
          <span class="dk"><svg><use href="#i-filterd"/></svg></span>
          <span class="dk off"><svg><use href="#i-expr"/></svg></span><span class="drop drop-dk off"><b></b></span>
          <span class="dk"><svg><use href="#i-expand"/></svg></span>
          <span class="dk"><svg><use href="#i-collapse"/></svg></span>
          <span class="dk"><svg><use href="#i-rmgrp"/></svg></span>
        </div>
        <ul class="layer-list">
          <li><span class="check on"></span><span class="swatch"><i class="dot green"></i></span><span class="lname">top_20_lowest_death_rate_pharmacy</span></li>
          <li><span class="check on"></span><span class="swatch"><i class="dot red"></i></span><span class="lname">top_20_highest_death_rate_pharmacy</span></li>
          <li><span class="check on"></span><span class="swatch"><i class="dot yellow"></i></span><span class="lname">top_20_highest_people_served_pharmacy_table</span></li>
          <li><span class="check on"></span><span class="swatch"><i class="square teal"></i></span><span class="lname">dead2_table</span></li>
          <li><span class="check"></span><span class="swatch"><i class="square orange"></i></span><span class="lname current">county2_table</span></li>
        </ul>
      </section>
    </aside>

    <section class="map-canvas">
      <svg class="map" viewBox="574 165 1346 878">
        <g class="land">
          <path d="M1520 389 1530 395 1533 403 1543 413 1552 417 1563 420 1572 419 1583 422 1583 433 1590 438 1599 442 1590 445 1580 448 1572 460 1568 470 1565 487 1568 510 1577 520 1573 533 1572 542 1562 552 1555 572 1537 592 1530 617 1532 627 1525 643 1520 668 1515 690 1511 705 1508 717 1508 727 1502 743 1493 770 1487 792 1492 793 1477 810 1467 830 1450 843 1449 855 1430 867 1417 880 1408 903 1397 923 1392 950 1393 993 1382 1005 1383 1015 1387 1022 1373 1013 1363 1018 1358 1010 1353 998 1358 983 1347 957 1337 932 1310 917 1290 905 1272 880 1258 833 1253 818 1230 802 1240 773 1250 747 1245 730 1248 720 1252 700 1257 667 1277 643 1290 617 1299 610 1313 590 1318 577 1340 557 1357 520 1370 505 1392 490 1400 472 1418 440 1440 428 1460 422 1487 413 1495 400 1505 392z"/>
          <path d="M1227 730 1247 718 1249 722 1236 731 1230 738z"/>
          <g transform="translate(1200 690) scale(.3333)">
            <path d="M895 560l30-4-3 22-10 8zM916 892l45 2 12 32-10 4-30-12-15-16zM275 758l15-16 8 4-14 14zM972 964h8v6h-8z"/>
          </g>
          <g transform="translate(880 170) scale(.3333)">
            <path d="M85 1118l12-10 18 10 35-22 10-12 20 18 8 28-14 18-50 6-25 6-20-8z"/>
          </g>
          <g transform="translate(1080 650) scale(.3333)">
            <path d="M205 185l25-6 10-10 28 18-22 8-14 16-22 6-8-14zM162 178l5-30 30-22 22 4-6 16-20 4-14 22zM145 298l8-18 20 8 18 12-28 6zM108 380l24-5-8 18z"/>
          </g>
        </g>

        <g class="bounds" transform="translate(1200 370) scale(.3333)">
          <path d="M590 510 650 500 720 505 760 495 785 540 815 545 860 470 835 395 800 360 720 350 700 320M590 510 585 590 650 600 665 615 730 590 785 540M815 545 825 515 880 460 905 405 960 395 1010 350 970 345 975 330 1060 340 1095 320M815 545 850 575 885 570 990 590 1060 605M885 570 905 535 985 515 1040 480 1085 430M885 570 850 630 795 690 810 720 785 800 800 825 765 880 755 920 770 960 765 990M850 630 780 650 730 660 690 680 610 720 580 710 570 660 580 600M610 720 600 760 630 790 670 790 640 820 635 880 690 885 765 880M800 825 850 870 885 885 880 940 950 960M975 790 925 800 930 830 895 885M925 890 925 850M880 940 945 940M1040 480 1115 510"/>
          <path d="M680 500 680 440 745 425 750 495M745 425 800 360M610 500 620 440 600 420 575 360M655 210 700 260 640 290 600 305M720 180 740 245 700 260M740 245 780 240 825 270 835 305 800 320 770 290 735 290 700 320 660 335 670 380 700 410M640 290 680 300 735 290M600 370 610 400 680 440M780 160 790 200M825 270 900 255 950 280 905 305 835 305M900 255 890 200 860 160M880 100 930 110 950 90 1000 110M930 110 920 150 890 200M950 130 980 110M920 150 1000 150 1030 135M1000 150 1000 190 1060 230 1065 235 1100 250 1120 190 1150 160 1080 170 1060 230M950 280 1000 200M905 305 920 285 970 290 1005 290 1010 240 1065 235M880 305 870 350 880 390 905 405M870 350 905 305M1060 340 1060 380 1100 390M970 345 970 380 955 425 1040 430 1060 460"/>
          <path d="M470 455 515 470 560 450 610 470 610 500M510 405 520 440 515 470 500 520 470 530 435 540M560 450 555 490 590 510M555 490 520 540 590 540M500 520 520 540 510 590 450 600 385 595M510 590 585 590M435 540 420 570 450 600 470 625 525 620 570 660M385 595 360 630 410 640 470 625M410 640 400 690 340 660M470 625 480 660 525 660 570 690M400 690 410 740 500 770 520 780 545 755 550 810 480 810 500 770M480 660 470 700 520 740 540 720 580 710M340 660 350 710 290 730 270 745 320 780 365 760 350 710M365 760 410 740M365 760 420 790 480 810 480 850 430 850M320 780 300 820 230 825M300 820 340 870 400 850 430 790M550 810 565 850 630 860M565 850 550 925 530 960 540 990M400 850 420 890 470 880 480 850M470 880 500 905M420 890 400 940 440 900 440 970 530 960M340 870 320 900 240 880 200 860M320 900 350 950 400 940M240 880 240 930 300 950 290 990M170 900 200 960 240 930M350 950 360 990M350 790 400 830M360 810 395 800M345 830 400 820M370 780 380 850M380 800 410 790M410 780 430 830"/>
          <path d="M430 580 470 590M390 620 430 610M500 640 545 640 550 600M540 660 550 620M470 580 500 560M445 550 480 570M520 560 570 570M560 540 555 590M300 760 310 800M270 790 250 830M230 825 210 860M410 740 440 770 430 790M440 740 470 740M470 770 470 810M500 780 510 810M330 830 360 860M300 850 280 890M260 840 250 880M370 880 380 910M430 870 430 890M500 830 540 830M510 850 510 900 520 960M480 900 490 960M570 880 620 880 620 930M620 880 635 880M600 930 640 920 640 980M690 885 700 940 690 990M460 920 460 960M390 950 400 990M320 950 330 990M260 950 250 990M200 920 170 950M215 960 220 990"/>
          <path d="M640 370 650 400M620 400 650 440 650 500M560 400 590 420M525 430 560 450M700 410 680 440M760 290 770 320M855 190 830 230M770 200 720 220M700 260 720 280M1020 190 1060 150M960 240 990 220M920 230 880 250M960 100 970 140M1000 290 1040 290 1060 340M1090 260 1100 310M1085 430 1090 470M1010 350 1020 410M1040 430 1085 430M940 680 920 740M975 680 1000 680M885 680 940 680"/>
        </g>
        <g class="bounds" transform="translate(1200 690) scale(.3333)">
          <path d="M770 0 765 40 720 70 660 95 660 125 630 175 660 210 590 240 575 295 570 370 545 395 590 410 620 385 700 380M765 40 790 55 810 60 830 125 790 200 785 250 740 270 680 240 660 210M845 0 845 60 880 80 885 130 830 125M880 130 920 110M790 200 860 130M785 250 860 255 860 305M815 320 790 320 740 290 720 370 700 440 740 460 745 420 790 320M815 320 810 385M700 380 700 440 650 460 620 490 580 490 560 460 510 470 490 510 430 540M580 490 580 530 520 550 500 575M560 460 545 395 450 385 455 440"/>
          <path d="M620 490 660 510 710 480 745 490M660 510 650 560 610 575 520 565 500 570 420 560M540 0 545 100 590 125 650 125M600 125 555 135 530 190 445 240M490 60 490 100 430 175 380 185 380 250 440 260 450 215 500 185M440 260 390 330 340 330M440 260 490 290 570 230M500 310 460 385 425 340 380 350 325 390M455 440 430 460 400 400 360 425 310 480 340 480 390 470M430 460 430 540 420 600 495 625 495 570M420 600 430 720 470 690 510 700 510 660 495 625M510 660 590 670 610 680M510 700 520 760 575 780M430 720 500 730 510 760M450 740 470 810 575 815 560 880 530 895 520 930M475 880 520 875 545 860"/>
          <path d="M150 80 240 30 290 40 370 60 490 60M160 30 230 70 300 50 350 90 410 130 415 175 380 185M145 100 230 110 280 130 350 145 355 170M170 170 220 180 270 205 320 215 375 195M125 260 190 250 235 205 270 205M190 250 250 230 330 250 380 250M235 160 230 110M110 340 190 320 190 250M270 300 300 275 345 275 350 310 400 315 410 255M190 320 235 345 270 300M140 370 235 345 320 370 325 390M160 385 230 380 225 440 260 420 300 430 270 480 220 505 210 540M230 380 240 440M270 360 280 420M180 430 225 440M270 480 335 510 330 570 385 580 420 600M335 475 385 480 390 515 360 520 430 540M220 505 270 520 330 520M240 560 300 530 320 590 310 625M320 590 380 590 385 650 340 660 350 690M385 650 430 650M240 600 300 625 340 630M270 640 320 645M150 210 210 215 240 260 290 255M300 160 350 200M120 300 170 300M245 20 250 60M290 80 290 130M340 40 330 90"/>
          <path d="M170 60 200 60M190 30 200 100M260 60 265 110M320 80 310 130M370 90 370 150M200 130 190 170M250 130 240 180M300 140 290 190M340 170 330 215M140 150 180 170M130 200 170 210M210 215 200 250M290 215 280 250M140 235 170 250M330 250 320 290M260 235 265 290M230 260 240 300M160 290 150 340M120 320 160 340M200 350 210 380M300 370 310 420M180 380 175 430M250 350 250 420M340 390 340 470M370 420 380 480M200 440 205 480M230 440 230 505M290 440 310 480M250 480 240 520M300 490 295 530M230 530 260 555M270 580 280 620M340 530 340 590M370 520 380 590M400 540 395 590M240 640 265 620M300 640 300 680M340 660 310 680M370 650 365 690M395 650 400 700"/>
          <path class="blob" d="M232 590 246 582 256 604 270 632 262 636 244 612z"/>
          <path class="blob" d="M622 580l18 6-6 10zM476 918l10 2-2 8-8-2z"/>
        </g>

        <!-- dark specks, offshore islands -->
        <g class="specks" transform="translate(880 170) scale(.3333)">
          <path d="M1025 108l14-8 2 10-12 8zM1155 78l12-9 2 4-10 9zM1040 97h5v5h-5zM1072 130h5v5h-5zM1062 136h5v4h-5zM1149 124h5v4h-5zM1261 175h6v5h-6zM1020 198h5v5h-5zM1015 212h6v7h-6zM992 274l16-2 4 10-14 2zM1020 282l14-8 4-4-6 16-12 10zM726 824l10 0 2 6-10 0zM738 830l10 0v7h-10zM990 170l10-12-2 28-10 2z"/>
        </g>
        <g class="specks" transform="translate(1080 650) scale(.3333)">
          <path d="M54 270h12v9H54zM55 316l14 3 5 10-14-6zM155 338l6 16 8 8-14-4zM220 356h10v8h-10zM245 352l16 0-4 12zM185 365h6v6h-6zM165 367h5v5h-5zM208 46l6 30 14 14-12 4-18-34zM186 96h14v10h-14zM220 112l12 6-6 12zM250 110l8 12-14 4zM265 148l14 6-10 6zM140 180l20-6v12zM165 222l20-8-2 14zM282 188l6 10h-8zM635 876l20-16 3 8-16 12zM1333 1083h8v6h-8zM200 60h8v6h-8zM238 128h6v6h-6zM232 100h6v8h-6zM196 150h6v6h-6zM180 200h8v6h-8zM150 160h8v10h-8zM270 130h8v6h-8zM275 180h6v6h-6z"/>
        </g>

        <g class="pts yellow">
          <g transform="translate(1200 370) scale(.3333)">
            <circle cx="695" cy="239"/><circle cx="1155" cy="191"/><circle cx="597" cy="340"/><circle cx="592" cy="375"/><circle cx="585" cy="366"/><circle cx="714" cy="380"/><circle class="bright" cx="750" cy="386"/><circle cx="1077" cy="365"/><circle cx="1002" cy="410"/><circle cx="561" cy="426"/><circle cx="636" cy="446"/><circle cx="989" cy="711"/><circle cx="501" cy="924"/>
          </g>
          <g transform="translate(1200 690) scale(.3333)">
            <circle cx="242" cy="104"/><circle cx="165" cy="122"/><circle cx="155" cy="125"/><circle cx="776" cy="282"/><circle cx="209" cy="312"/><circle cx="206" cy="329"/><circle cx="203" cy="480"/><circle cx="297" cy="570"/><circle cx="285" cy="566"/><circle cx="266" cy="572"/>
          </g>
          <g transform="translate(880 170) scale(.3333)"><circle cx="56" cy="1140"/></g>
        </g>
        <g class="pts red">
          <g transform="translate(1200 370) scale(.3333)"><circle cx="1050" cy="209"/><circle cx="705" cy="428"/></g>
          <g transform="translate(1200 690) scale(.3333)">
            <circle cx="470" cy="119"/><circle cx="805" cy="185"/><circle cx="812" cy="190"/><circle cx="813" cy="198"/><circle cx="890" cy="201"/><circle cx="504" cy="290"/><circle cx="408" cy="332"/><circle cx="734" cy="323"/><circle cx="305" cy="347"/><circle cx="450" cy="443"/><circle cx="683" cy="434"/><circle cx="482" cy="518"/><circle cx="440" cy="542"/><circle cx="431" cy="607"/><circle cx="426" cy="731"/><circle cx="443" cy="791"/><circle cx="470" cy="824"/><circle cx="464" cy="830"/><circle cx="546" cy="926"/>
          </g>
        </g>
        <g class="pts green">
          <g transform="translate(1200 370) scale(.3333)">
            <circle cx="798" cy="177"/><circle cx="850" cy="178"/><circle cx="858" cy="180"/><circle cx="775" cy="210"/><circle cx="815" cy="215"/><circle cx="820" cy="225"/><circle cx="795" cy="225"/><circle cx="810" cy="225"/><circle cx="800" cy="243"/>
            <circle cx="950" cy="180"/><circle cx="980" cy="183"/><circle cx="965" cy="185"/><circle cx="945" cy="190"/><circle cx="930" cy="195"/><circle cx="925" cy="205"/><circle cx="920" cy="210"/><circle cx="945" cy="225"/><circle cx="935" cy="225"/><circle cx="957" cy="232"/>
            <circle cx="640" cy="312"/><circle cx="618" cy="335"/><circle cx="620" cy="350"/><circle cx="645" cy="343"/>
            <circle cx="448" cy="672"/><circle cx="410" cy="685"/><circle cx="424" cy="678"/><circle cx="420" cy="705"/><circle cx="460" cy="708"/><circle cx="447" cy="720"/>
          </g>
          <g transform="translate(880 170) scale(.3333)">
            <circle cx="1310" cy="59"/><circle cx="1038" cy="140"/><circle cx="1011" cy="173"/><circle cx="115" cy="1130"/><circle cx="102" cy="1140"/><circle cx="80" cy="1148"/><circle cx="137" cy="1137"/><circle cx="152" cy="1133"/><circle cx="152" cy="1108"/>
          </g>
        </g>
      </svg>
    </section>
  </main>

  <footer class="statusbar">
    <label class="locate"><svg viewBox="0 0 20 20"><circle cx="9" cy="9" r="6.500" fill="none" stroke="#777" stroke-width="2"/><path d="M13.500 14l4 5" stroke="#777" stroke-width="2"/></svg><span>Type to locate (Ctrl+K)</span></label>
    <div class="status-right">
      <span class="st-label">Coordinate</span>
      <span class="field f-coord">23.251°,116.576°</span>
      <svg class="st-ic" viewBox="0 0 24 24"><path d="M8 2l8 5-3 5 5 4-3 5-10-6 3-5-5-4z" fill="#fff" stroke="#111" stroke-width="2"/><circle cx="10" cy="17" r="3.500" fill="none" stroke="#111" stroke-width="2"/><path d="M20 4l2-2" stroke="#555"/></svg>
      <span class="st-label l-scale">Scale</span>
      <span class="field f-scale">1:2468902<b class="combo"></b></span>
      <svg class="st-ic lock" viewBox="0 0 20 28"><path d="M5 13V7a5 5 0 0 1 10 0v6" fill="none" stroke="#888" stroke-width="2"/><rect x="2" y="12" width="16" height="15" rx="2" fill="#666"/></svg>
      <span class="st-label">Magnifier</span>
      <span class="field f-mag">100%<span class="spin"><b class="up"></b><b class="down"></b></span></span>
      <span class="st-label l-rot">Rotation</span>
      <span class="field f-rot">0.0 °<span class="spin"><b class="up"></b><b class="down"></b></span></span>
      <span class="check on st-check"></span>
      <span class="st-label l-render">Render</span>
      <svg class="st-ic globe" viewBox="0 0 24 24"><circle cx="12" cy="12" r="10" fill="#bbb" stroke="#555"/><path d="M2 12h20M4 7h16M4 17h16M12 2v20M7 3c-3 6-3 12 0 18M17 3c3 6 3 12 0 18" fill="none" stroke="#444"/></svg>
      <span class="st-label l-epsg">EPSG:4326</span>
      <svg class="st-ic chat" viewBox="0 0 26 28"><path d="M13 1c7 0 12 5 12 11s-5 11-11 11l3 4c-8-1-16-7-16-15C1 6 6 1 13 1z" fill="#4d5a66"/><circle cx="8" cy="12" r="1.800" fill="#fff"/><circle cx="13" cy="12" r="1.800" fill="#fff"/><circle cx="18" cy="12" r="1.800" fill="#fff"/></svg>
    </div>
  </footer>
  <div class="taskstrip"></div>
</body>
</html>
```

FILE: styles.css
```css
* {
  box-sizing: border-box;
}

html, body {
  height: 100%;
}

body {
  margin: 0;
  width: 1920px;
  height: 1080px;
  overflow: hidden;
  display: flex;
  flex-direction: column;
  background: #f0f0f0;
  color: #000;
  font-family: "Noto Sans", "Open Sans", sans-serif;
}

.sprite {
  position: absolute;
  width: 0;
  height: 0;
}

.svg-t {
  font-family: "Liberation Serif", serif;
  font-size: 14px;
  fill: #555;
}
.svg-s { font-size: 9px; font-weight: bold; fill: #888; }
.svg-q { font-family: "Liberation Sans", sans-serif; font-size: 20px; fill: #fff; }
.svg-tag { font-size: 12px; fill: #333; }
.svg-red { fill: #e3242b; }
.svg-grey { fill: #aaa; }

/* title + menu */
.titlebar {
  height: 34px;
  flex: none;
  display: flex;
  align-items: center;
  padding-left: 3px;
  background: #fff;
}

.logo {
  width: 24px;
  height: 24px;
}

.title {
  margin-left: 4px;
  margin-top: -2px;
  font-size: 18.300px;
  white-space: nowrap;
}

.winbtns {
  margin-left: auto;
  margin-right: 29px;
  display: flex;
  gap: 53px;
}

.winbtns svg {
  width: 16px;
  height: 16px;
}

.menubar {
  height: 28px;
  flex: none;
  display: flex;
  padding: 0 0 2px 13px;
  gap: 17.400px;
  align-items: center;
  font-size: 18px;
  background: #f0f0f0;
  border-bottom: 1px solid #d8d8d8;
}

/* toolbars */
.toolbar {
  height: 51px;
  flex: none;
  display: flex;
  align-items: center;
  background: linear-gradient(#fbfbfb, #efefef);
  border-bottom: 2px solid #cfcfcf;
}

.toolbar-last {
  border-bottom: 3px solid #b5b5b5;
}

.handle {
  width: 8px;
  height: 22px;
  flex: none;
  margin: 0 4px 0 12px;
  background-image: radial-gradient(#aaa 1px, transparent 1px);
  background-size: 3px 3px;
}

.handle.first {
  margin-left: 7px;
}

.sep {
  width: 1px;
  height: 30px;
  flex: none;
  margin: 0 4px 0 5px;
  background: #d4d4d4;
}

.tb {
  width: 41px;
  height: 40px;
  flex: none;
  display: flex;
  align-items: center;
  justify-content: center;
}

.tb svg {
  width: 30px;
  height: 30px;
}

.tb.active {
  background: #dcdcdc;
  border: 1px solid #bbb;
  border-radius: 3px;
}

.gap2 { margin-left: 2px; }
.gap3 { margin-left: 3px; }

.off svg {
  opacity: .45;
  filter: grayscale(1);
}

.drop {
  width: 16px;
  height: 40px;
  flex: none;
  display: flex;
  align-items: center;
  justify-content: center;
}

.drop.active {
  width: 18px;
  background: #dcdcdc;
  border: 1px solid #c8c8c8;
  border-radius: 3px;
}

.drop b {
  width: 0;
  height: 0;
  border-left: 5px solid transparent;
  border-right: 5px solid transparent;
  border-top: 6px solid #444;
}

.drop.off b {
  border-top-color: #aaa;
}

/* left docks */
.workspace {
  flex: 1;
  display: flex;
  min-height: 0;
}

.docks {
  width: 565px;
  flex: none;
  display: flex;
  flex-direction: column;
}

.dock-head {
  height: 20px;
  display: flex;
  align-items: center;
  justify-content: space-between;
  padding: 0 2px 0 4px;
  font-size: 18px;
}

.dock-btns {
  display: flex;
  gap: 3px;
}

.dock-btns svg {
  width: 12px;
  height: 12px;
}

.dock-tools {
  height: 44px;
  display: flex;
  align-items: center;
  padding-left: 5px;
}

.dk {
  width: 33px;
  height: 30px;
  flex: none;
  display: flex;
  align-items: center;
  justify-content: center;
}

.dk svg {
  width: 24px;
  height: 24px;
}

.drop-dk {
  width: 15px;
  margin-right: 4px;
}

.tree-box {
  height: 365px;
  margin-left: 1px;
  margin-right: 2px;
  display: flex;
  background: #fff;
  border: 1px solid #b4b4b4;
}

.tree {
  flex: 1;
  margin: 0;
  padding: 0;
  list-style: none;
  font-size: 18px;
}

.tree li {
  height: 26px;
  display: flex;
  align-items: center;
  white-space: nowrap;
}

.tree svg {
  width: 24px;
  height: 24px;
  margin-right: 6px;
  flex: none;
}

.arrow {
  width: 0;
  height: 0;
  flex: none;
  margin: 0 9px 0 6px;
  border-top: 5px solid transparent;
  border-bottom: 5px solid transparent;
  border-left: 6px solid #444;
}

.arrow.none {
  border-color: transparent;
}

.scrollbar {
  width: 20px;
  flex: none;
  display: flex;
  flex-direction: column;
  border-left: 1px solid #d0d0d0;
  background: #f6f6f6;
}

.sb-btn {
  height: 22px;
  flex: none;
  display: flex;
  align-items: center;
  justify-content: center;
  border-bottom: 1px solid #d8d8d8;
  background: #fff;
}

.sb-track {
  height: 197px;
  flex: none;
  background: linear-gradient(90deg, #fafafa, #f0f0f0);
  border-bottom: 1px solid #c8c8c8;
}

.sb-thumb {
  flex: 1;
  background: #e4e4e4;
}

.scrollbar b,
.spin b {
  width: 0;
  height: 0;
  border-left: 5px solid transparent;
  border-right: 5px solid transparent;
}

b.up { border-bottom: 6px solid #555; }
b.down { border-top: 6px solid #555; }

.splitter {
  height: 7px;
  flex: none;
}

.dock-layers {
  flex: 1;
  display: flex;
  flex-direction: column;
  min-height: 0;
}

.dock-layers .dock-head {
  margin-top: 2px;
}

.dock-layers .dock-tools {
  height: 45px;
}

.layer-list {
  flex: 1;
  margin: 0 2px 0 1px;
  padding: 0;
  list-style: none;
  background: #fff;
  border: 1px solid #b4b4b4;
  font-size: 18.500px;
  font-weight: 500;
}

.layer-list li {
  height: 25px;
  display: flex;
  align-items: center;
  white-space: nowrap;
}

.layer-list li:first-child {
  margin-top: -2px;
}

.check {
  width: 21px;
  height: 21px;
  flex: none;
  margin-left: 32px;
  display: flex;
  align-items: center;
  justify-content: center;
  background: #fff;
  border: 1px solid #c4c4c4;
}

.check.on::after {
  content: "";
  width: 13px;
  height: 16px;
  background: #000;
  clip-path: polygon(0 52%, 18% 50%, 38% 76%, 86% 0, 100% 0, 44% 100%, 30% 100%);
}

.swatch {
  width: 33px;
  flex: none;
  display: flex;
  justify-content: center;
}

.dot {
  width: 12px;
  height: 12px;
  border-radius: 50%;
  border: 1px solid #333;
}

.dot.green { background: #1cf04f; }
.dot.red { background: #f01c22; }
.dot.yellow { background: #f4de4e; }

.square {
  width: 21px;
  height: 22px;
  border: 1px solid #333;
}

.square.teal { background: #2f7f69; }
.square.orange { background: #f89c14; }

.lname {
  line-height: 23px;
}

.current {
  flex: 1;
  height: 24px;
  margin-left: -3px;
  margin-right: 1px;
  padding-left: 3px;
  font-style: italic;
  font-weight: 400;
  color: #76848f;
  text-decoration: underline;
  background: #eaf5fd;
  border: 1px solid #b8d8f0;
}

/* map */
.map-canvas {
  flex: 1;
  margin-left: 9px;
  background: #fff;
  border: 1px solid #b4b4b4;
  border-top: 0;
  overflow: hidden;
}

.map {
  display: block;
  width: 1346px;
  height: 878px;
}

.land path {
  fill: #2f7f69;
  stroke: #222;
  stroke-width: 1.400px;
  stroke-linejoin: round;
}

.land g path {
  stroke-width: 4px;
}

.bounds path {
  fill: none;
  stroke: #222;
  stroke-width: 4.200px;
  stroke-linejoin: round;
}

.bounds .blob,
.specks path {
  fill: #222;
  stroke: #222;
  stroke-width: 2px;
}

.pts circle {
  r: 18px;
  stroke: #3a3a20;
  stroke-width: 2.500px;
}

.pts.yellow circle { fill: #f4de4e; }
.pts.yellow circle.bright { fill: #ffff00; }
.pts.red circle { fill: #f01c22; }
.pts.green circle { fill: #17f150; }

/* status bar */
.statusbar {
  height: 34px;
  flex: none;
  display: flex;
  align-items: center;
  padding: 3px 0 0 4px;
  font-family: "Liberation Serif", serif;
  font-size: 16px;
  color: #222;
}

.locate {
  width: 295px;
  height: 29px;
  flex: none;
  display: flex;
  align-items: center;
  gap: 7px;
  padding-left: 11px;
  background: #fff;
  border: 1px solid #b4b4b4;
  border-radius: 3px;
  color: #8a8a8a;
  font-size: 17px;
}

.locate svg {
  width: 20px;
  height: 20px;
}

.status-right {
  margin-left: 617px;
  flex: 1;
  display: flex;
  align-items: center;
}

.st-label {
  white-space: nowrap;
}

.field {
  height: 28px;
  display: flex;
  align-items: center;
  flex: none;
  padding-left: 5px;
  background: #fff;
  border: 1px solid #b4b4b4;
  border-radius: 3px;
  white-space: nowrap;
}

.f-coord { width: 124px; margin-left: 2px; }
.f-scale { width: 105px; margin-left: 3px; padding-left: 3px; }
.f-mag { width: 103px; margin-left: 2px; }
.f-rot { width: 96px; margin-left: 5px; }

.st-ic {
  flex: none;
  width: 24px;
  height: 24px;
}

.st-ic:first-of-type { margin-left: 4px; }
.l-scale { margin-left: 8px; }
.lock { width: 18px; height: 26px; margin-left: 14px; margin-right: 10px; }
.l-rot { margin-left: 10px; }
.st-check { margin-left: 6px; }
.l-render { margin-left: 8px; }
.globe { margin-left: 13px; margin-right: 3px; }
.l-epsg { font-size: 15px; }
.chat { margin-left: auto; margin-right: 7px; width: 26px; height: 28px; }

.combo {
  margin-left: auto;
  margin-right: 9px;
  width: 0;
  height: 0;
  border-left: 6px solid transparent;
  border-right: 6px solid transparent;
  border-top: 7px solid #555;
}

.spin {
  margin-left: auto;
  width: 20px;
  height: 100%;
  display: flex;
  flex-direction: column;
  align-items: center;
  justify-content: center;
  gap: 4px;
  border-left: 1px solid #ddd;
}

.taskstrip {
  height: 3px;
  flex: none;
  background: #3a3a3a;
}
```
